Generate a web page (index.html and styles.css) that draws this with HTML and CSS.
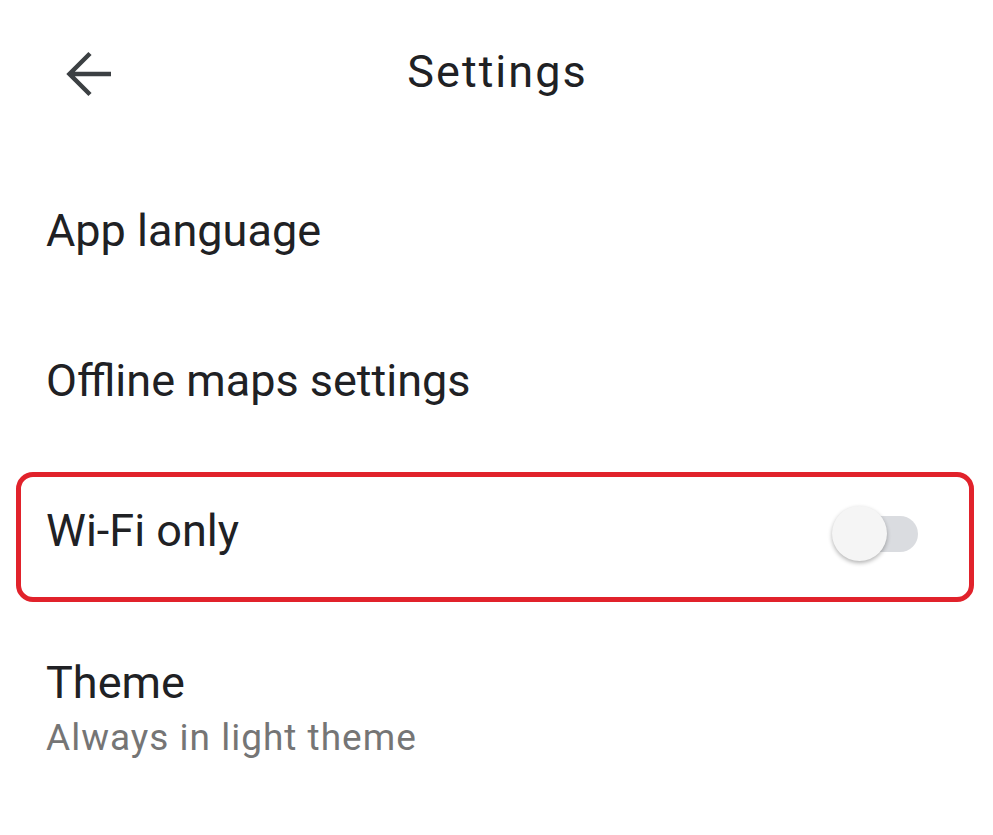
FILE: index.html
```html
<!DOCTYPE html>
<html>
<head>
<meta charset="utf-8">
<link rel="stylesheet" href="styles.css">
</head>
<body>
<div class="screen">
  <header class="topbar">
    <button class="back" aria-label="Back">
      <svg width="48" height="48" viewBox="0 0 48 48"><path d="M47 24H6M26 3.5L5.5 24 26 44.5" fill="none" stroke="#3c4043" stroke-width="4.5"/></svg>
    </button>
    <h1 class="title">Settings</h1>
  </header>
  <div class="item"><span class="label">App language</span></div>
  <div class="item"><span class="label">Offline maps settings</span></div>
  <div class="item-wrap">
    <div class="item highlight">
      <span class="label">Wi-Fi only</span>
      <div class="switch"><div class="track"></div><div class="thumb"></div></div>
    </div>
  </div>
  <div class="two-line">
    <div class="label">Theme</div>
    <div class="sub">Always in light theme</div>
  </div>
</div>
</body>
</html>
```
FILE: styles.css
```css
html, body { margin: 0; padding: 0; background: #fff; }
body { font-family: "Roboto", "Open Sans", sans-serif; color: #202124; }
.screen { width: 993px; height: 835px; overflow: hidden; }
.topbar { position: relative; height: 155px; display: flex; align-items: center; justify-content: center; }
.back { position: absolute; left: 64px; top: 50px; width: 48px; height: 48px; padding: 0; border: 0; background: none; }
.back svg { display: block; }
.title { margin: 0 0 12px 2px; font-weight: 400; font-size: 45px; color: #202124; letter-spacing: 2px; }
.item { height: 150px; display: flex; align-items: center; padding-left: 46px; box-sizing: border-box; }
.label { font-size: 45px; color: #202124; }
.item-wrap { height: 150px; box-sizing: border-box; padding: 17px 19px 3px 16px; }
.highlight { height: 130px; padding-left: 25px; padding-right: 51px; padding-bottom: 13px; border: 5px solid #e1222b; border-radius: 17px; justify-content: space-between; }
.switch { position: relative; width: 86px; height: 58px; margin-top: 6px; }
.track { position: absolute; left: 14px; right: 0; top: 11px; height: 36px; border-radius: 18px; background: #dadce0; }
.thumb { position: absolute; left: 0; top: 1px; width: 55px; height: 55px; border-radius: 50%; background: #f5f5f5; box-shadow: 0 2px 4px rgba(0,0,0,0.3); }
.two-line { padding: 50px 0 0 46px; }
.two-line .label { line-height: 56px; }
.sub { font-size: 37px; color: #757575; line-height: 54px; letter-spacing: 1px; }
```
